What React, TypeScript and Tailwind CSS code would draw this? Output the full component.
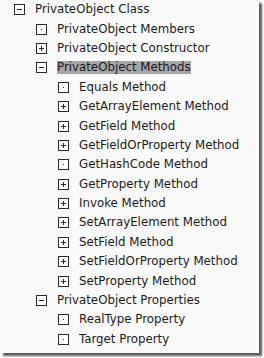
import React from "react";

type Kind = "minus" | "plus" | "leaf";
type Row = { level: number; kind: Kind; text: string; selected?: boolean };

const rows: Row[] = [
  { level: 0, kind: "minus", text: "PrivateObject Class" },
  { level: 1, kind: "leaf", text: "PrivateObject Members" },
  { level: 1, kind: "plus", text: "PrivateObject Constructor" },
  { level: 1, kind: "minus", text: "PrivateObject Methods", selected: true },
  { level: 2, kind: "leaf", text: "Equals Method" },
  { level: 2, kind: "plus", text: "GetArrayElement Method" },
  { level: 2, kind: "plus", text: "GetField Method" },
  { level: 2, kind: "plus", text: "GetFieldOrProperty Method" },
  { level: 2, kind: "leaf", text: "GetHashCode Method" },
  { level: 2, kind: "plus", text: "GetProperty Method" },
  { level: 2, kind: "plus", text: "Invoke Method" },
  { level: 2, kind: "plus", text: "SetArrayElement Method" },
  { level: 2, kind: "plus", text: "SetField Method" },
  { level: 2, kind: "plus", text: "SetFieldOrProperty Method" },
  { level: 2, kind: "plus", text: "SetProperty Method" },
  { level: 1, kind: "minus", text: "PrivateObject Properties" },
  { level: 2, kind: "leaf", text: "RealType Property" },
  { level: 2, kind: "leaf", text: "Target Property" },
];

function Box({ kind }: { kind: Kind }) {
  return (
    <svg width="11" height="11" viewBox="0 0 11 11" className="shrink-0">
      <rect x="0.5" y="0.5" width="10" height="10" fill="#fff" stroke="#2a2a2a" strokeWidth="1" />
      {kind === "minus" && <rect x="3" y="5" width="5" height="1" fill="#2a2a2a" />}
      {kind === "plus" && (
        <>
          <rect x="3" y="5" width="5" height="1" fill="#2a2a2a" />
          <rect x="5" y="3" width="1" height="5" fill="#2a2a2a" />
        </>
      )}
      {kind === "leaf" && <rect x="5" y="5" width="1" height="1" fill="#2a2a2a" />}
    </svg>
  );
}

export default function App() {
  const indent = ["pl-[14px]", "pl-[36px]", "pl-[58px]"];
  return (
    <div className="w-[264px] h-[358px] bg-white">
      <div
        className="w-[259px] h-[353px] bg-[#fafafa] shadow-[3px_3px_2px_rgba(0,0,0,0.65)]"
        style={{ fontFamily: '"DejaVu Sans", Verdana, sans-serif' }}
      >
        {rows.map((r, i) => (
          <div key={i} className={`flex items-center h-[19.4px] ${indent[r.level]}`}>
            <Box kind={r.kind} />
            <span
              className={`ml-[10px] text-[11.8px] leading-[13px] text-[#1a1a24] whitespace-nowrap ${
                r.selected ? "bg-[#a6a6a6]" : ""
              }`}
            >
              {r.text}
            </span>
          </div>
        ))}
      </div>
    </div>
  );
}
